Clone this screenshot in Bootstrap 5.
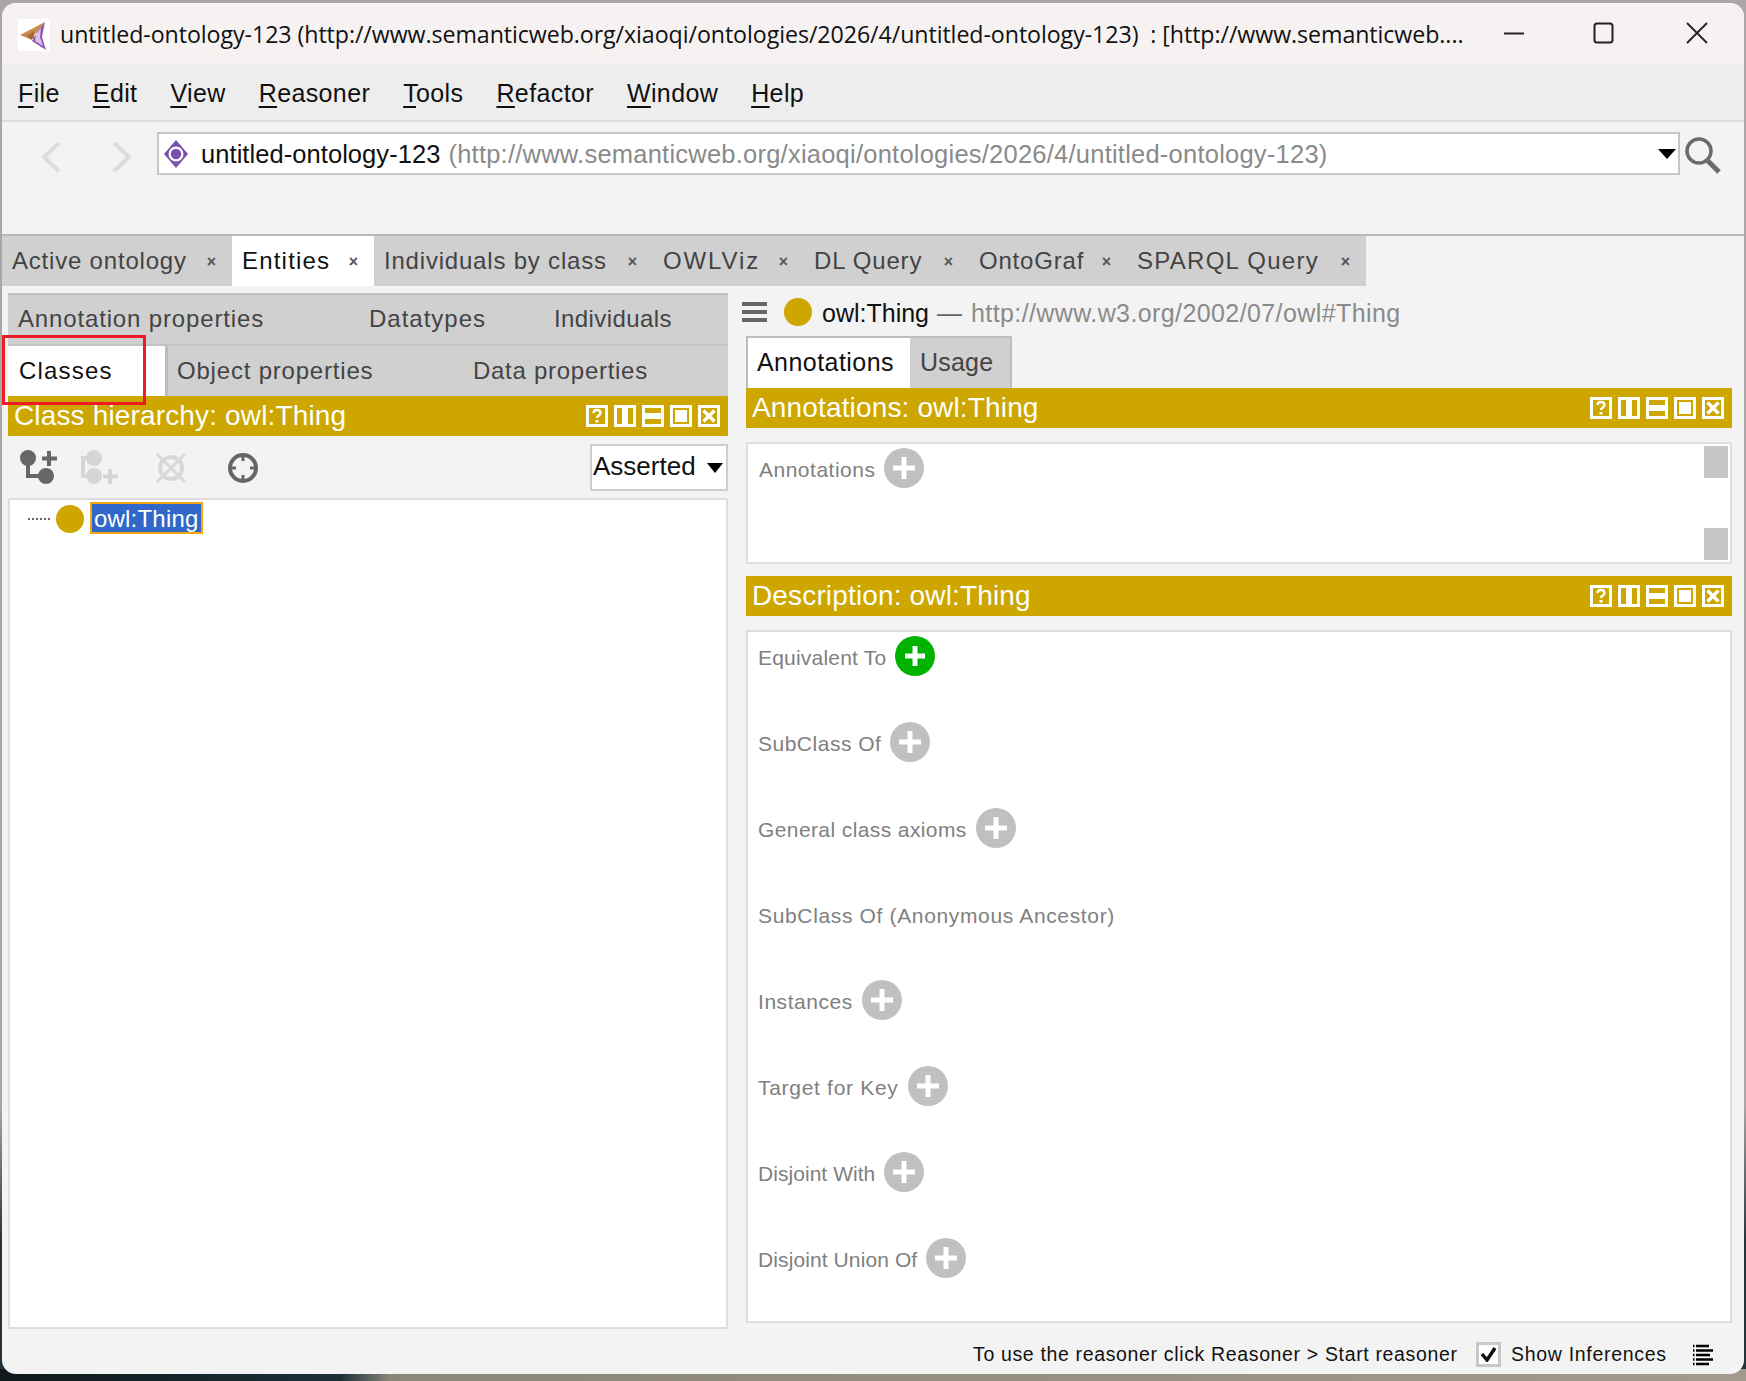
<!DOCTYPE html>
<html lang="en">
<head>
<meta charset="utf-8">
<title>Protégé</title>
<link rel="stylesheet" href="https://cdn.jsdelivr.net/npm/bootstrap@5.3.0/dist/css/bootstrap.min.css">
<style>
html,body{height:1381px;margin:0;overflow:hidden}
body{font-family:"Liberation Sans",Arial,sans-serif;color:#000;background:linear-gradient(to right,#10181a 0,#1a3038 340px,#8a8679 390px,#a39a8e 1746px) bottom/100% 12px no-repeat,linear-gradient(#aaa6a6 80%,#25333a 90%)}
.pw{margin:3px 0 0 2px;width:1742px;height:1371px;border-radius:14px;background:#f3f3f3;overflow:hidden;position:relative}
.ttl{height:61px;background:#f6f2f2;padding:2px 0 0 16px}
.ttl-text{font-family:"Open Sans","Noto Sans",sans-serif;font-size:23.2px;letter-spacing:-.07px;color:#111;margin-left:10px;width:1430px;white-space:pre}
.logo{width:32px;height:32px;background:#fff}
.wb{position:absolute;top:0;height:61px}
.wb1{left:1499px}.wb2{left:1590px}.wb3{left:1683px}
.mbar{height:58px;background:#ededed;border-bottom:2px solid #dcdcdc;font-size:25px;letter-spacing:.38px;padding:4px 0 0 16px;gap:33px;color:#111}
.mbar u{text-underline-offset:4px;text-decoration-thickness:2px}
.tbar{height:114px;background:#f3f3f3;border-bottom:2px solid #b8b8b8;padding:10px 0 0 0}
.nav-c{width:155px;height:47px;padding:2px 0 0 38px;gap:49px}
.addr{width:1523px;height:43px;background:#fff;border:2px solid #c6c6c6;font-size:25.5px;padding:2px 0 0 3px;position:relative}
.addr-name{margin-left:11px;color:#111;letter-spacing:.06px}
.addr-url{margin-left:8px;color:#8a8a8a;letter-spacing:.23px}
.ddarrow{width:0;height:0;border-left:9px solid transparent;border-right:9px solid transparent;border-top:10px solid #000}
.addr .ddarrow{position:absolute;right:2px;top:15px}
.mtabs{height:50px;font-size:24px;letter-spacing:.8px;color:#444}
.mtabs-in{background:#d0d0d0;width:1364px}
.mt{height:50px;padding-left:10px;white-space:nowrap}
.mt-on{background:#fff;color:#111}
.mt b{font-weight:700;font-size:16px;letter-spacing:0;color:#555;position:relative;top:1px;margin-right:16px}
.t1{width:230px}.t2{width:142px}.t3{width:279px}.t4{width:151px}.t5{width:165px}.t6{width:158px}.t7{width:239px}
.lsE{letter-spacing:1.2px}.lsO{letter-spacing:1.9px}.lsS{letter-spacing:1.27px}
.bdy{padding:7px 0 0 6px;gap:18px;height:1088px}
.lc{width:720px}.rc{width:986px}
.stabs{background:#d0d0d0;border-top:2px solid #c2c2c2;font-size:24px;letter-spacing:.85px;color:#444}
.st-r{height:49px}
.st-r2{height:52px;border-top:2px solid #c2c2c2}
.st-r .st{padding-bottom:2px}
.st{padding-left:10px;white-space:nowrap}
.st-on{background:#fff;color:#111;border-right:3px solid #bdbdbd;letter-spacing:1.2px}
.s1{width:351px}.s2{width:185px;letter-spacing:1px}.s3{width:184px;letter-spacing:.4px}.s4{width:160px;padding-left:11px}.s5{width:295px;padding-left:9px;letter-spacing:.8px}.s6{width:265px;letter-spacing:.72px}
.ghead{height:40px;background:#cda600;color:#fff;font-size:28px;letter-spacing:.15px;padding:0 8px 0 6px;white-space:nowrap}
.gi{width:22px;height:22px;margin-left:6px;display:block}
.ltb{height:62px;padding-right:0}
.ti{display:block;position:absolute}
.ti1{left:12px;top:12px}.ti2{left:66px;top:12px}.ti3{left:142px;top:12px}.ti4{left:212px;top:12px}
.asrt{width:138px;height:47px;background:#fff;border:2px solid #cfcfcf;font-size:26px;padding:0 3px 2px 1px;color:#111;margin-top:8px;margin-left:auto}
.asrt .ddarrow{border-left-width:8.500px;border-right-width:8.500px;position:relative;top:1px}
.wpanel{background:#fff;border:2px solid #dedede}
.tree{height:831px;padding:2px 0 0 18px}
.dots{width:22px;border-top:2px dotted #666;margin-right:6px}
.gdot{width:28px;height:28px;border-radius:50%;background:#cda600;flex:none}
.tdot{margin-top:3px}
.sel{margin-left:6px;height:32px;width:113px;background:#3067c8;border:2px solid #f5a60f;color:#fff;font-size:24px;letter-spacing:.2px;line-height:29px;padding-left:2px}
.ent{height:43px;padding:0 0 6px 0;font-size:25px;white-space:nowrap}
.burg{width:25px;margin-left:-4px;margin-right:17px}
.burg i{display:block;height:4px;background:#666;margin-bottom:4px}
.burg i:last-child{margin-bottom:0}
.ent-n{margin:4px 0 0 10px;color:#111}
.ent-d{margin:4px 0 0 8px;color:#666}
.ent-u{margin:4px 0 0 9px;color:#8a8a8a;letter-spacing:.4px}
.rtabs{height:52px;font-size:25px;letter-spacing:.45px}
.rt{padding-left:9px;border:2px solid #bdbdbd;border-bottom:0;white-space:nowrap}
.rt-a{width:164px;background:#fff;color:#111;border-right:0}
.rt-b{width:102px;background:#d0d0d0;color:#444;border-left:0;padding-left:10px;letter-spacing:.2px}
.anbox{height:122px;margin-top:14px;margin-bottom:12px;padding:4px 0 0 11px;position:relative}
.desc{height:693px;margin-top:14px;padding:4px 0 0 10px;gap:46px}
.rw{height:40px;gap:9px;font-size:21px;letter-spacing:.3px;color:#808080;white-space:nowrap}
.rw>span{padding-top:4px}
.l1{letter-spacing:.5px}.l2{letter-spacing:.2px}.l3{letter-spacing:.5px}.l4{letter-spacing:.4px}.l5{letter-spacing:.65px}.l6{letter-spacing:.55px}.l7{letter-spacing:.7px}.l8{letter-spacing:.05px}.l9{letter-spacing:.1px}
.pc{width:40px;height:40px;display:block;flex:none}
.thumb{position:absolute;left:956px;width:24px;height:32px;background:#c6c6c6}
.th1{top:2px}.th2{top:84px}
.stbar{position:absolute;left:0;right:0;top:1320px;height:51px;font-size:19.5px;color:#111;white-space:nowrap}
.st-t{position:absolute;left:971px;top:19px;letter-spacing:.65px;line-height:24px}
.st-c{position:absolute;left:1474px;top:19px;width:25px;height:25px;background:#fff;border:3px solid #c8c8c8}
.st-s{position:absolute;left:1509px;top:19px;letter-spacing:.7px;line-height:24px}
.st-l{position:absolute;left:1691px;top:21px;display:block}
.redbox{position:absolute;left:0;top:332px;width:144px;height:70px;border:3px solid #ed1c24;pointer-events:none}
.sv{display:none}
</style>
</head>
<body>
<svg class="sv" xmlns="http://www.w3.org/2000/svg">
<symbol id="h1" viewBox="0 0 22 22"><rect x="1.500" y="1.500" width="19" height="19" fill="none" stroke="#fff" stroke-width="3"/><path d="M7.500 8c0-4 7-4 7 0 0 2.500-3.500 2.500-3.500 5" fill="none" stroke="#fff" stroke-width="2.500"/><rect x="9.500" y="15" width="3" height="2.500" fill="#fff"/></symbol>
<symbol id="h2" viewBox="0 0 22 22"><rect x="1.500" y="1.500" width="19" height="19" fill="none" stroke="#fff" stroke-width="3"/><rect x="8" y="1" width="6" height="20" fill="#fff"/></symbol>
<symbol id="h3" viewBox="0 0 22 22"><rect x="1.500" y="1.500" width="19" height="19" fill="none" stroke="#fff" stroke-width="3"/><rect x="1" y="8" width="20" height="6" fill="#fff"/></symbol>
<symbol id="h4" viewBox="0 0 22 22"><rect x="1.500" y="1.500" width="19" height="19" fill="none" stroke="#fff" stroke-width="3"/><rect x="5" y="5" width="12" height="12" fill="#fff"/></symbol>
<symbol id="h5" viewBox="0 0 22 22"><rect x="1.500" y="1.500" width="19" height="19" fill="none" stroke="#fff" stroke-width="3"/><path d="M5.500 5.500l11 11M16.500 5.500l-11 11" stroke="#fff" stroke-width="3.500"/></symbol>
<symbol id="pg" viewBox="0 0 40 40"><circle cx="20" cy="20" r="20" fill="#c0c0c0"/><path d="M20 9v22M9 20h22" stroke="#fff" stroke-width="5"/></symbol>
<symbol id="pn" viewBox="0 0 40 40"><circle cx="20" cy="20" r="20" fill="#00b300"/><path d="M20 10v20M10 20h20" stroke="#fff" stroke-width="5"/></symbol>
</svg>

<div class="pw d-flex flex-column">
  <div class="ttl d-flex align-items-center flex-shrink-0">
    <svg class="logo flex-shrink-0" viewBox="0 0 32 32"><path d="M27 3L2 16l10 4 7-7z" fill="#c98a4a"/><path d="M27 3l-8 10-5 9 14 9-4-13z" fill="#8e56b5"/><path d="M23 9l-5 6-1 7 8 5-3-9z" fill="#d9c3e6"/><path d="M9 17l7-5 0 7-3 2z" fill="#a4683a"/></svg>
    <span class="ttl-text">untitled-ontology-123 (http://www.semanticweb.org/xiaoqi/ontologies/2026/4/untitled-ontology-123)  : [http://www.semanticweb....</span>
    <svg class="wb wb1" width="26" height="61" viewBox="0 0 26 61"><path d="M3 30.500h20" stroke="#222" stroke-width="2"/></svg>
    <svg class="wb wb2" width="24" height="61" viewBox="0 0 24 61"><rect x="2.500" y="20.500" width="18" height="19" rx="2.500" fill="none" stroke="#222" stroke-width="2"/></svg>
    <svg class="wb wb3" width="26" height="61" viewBox="0 0 26 61"><path d="M2 20l20 20M22 20L2 40" stroke="#222" stroke-width="1.800"/></svg>
  </div>
  <div class="mbar d-flex align-items-center flex-shrink-0">
    <span><u>F</u>ile</span><span><u>E</u>dit</span><span><u>V</u>iew</span><span><u>R</u>easoner</span><span><u>T</u>ools</span><span><u>R</u>efactor</span><span><u>W</u>indow</span><span><u>H</u>elp</span>
  </div>
  <div class="tbar d-flex align-items-start flex-shrink-0">
    <div class="nav-c d-flex align-items-center">
      <svg width="22" height="32" viewBox="0 0 22 32"><path d="M19 2L4 16l15 14" fill="none" stroke="#dcdcdc" stroke-width="4"/></svg>
      <svg width="22" height="32" viewBox="0 0 22 32"><path d="M3 2l15 14L3 30" fill="none" stroke="#dcdcdc" stroke-width="4"/></svg>
    </div>
    <div class="addr d-flex align-items-center">
      <svg class="flex-shrink-0" width="28" height="30" viewBox="0 0 28 30"><path d="M14 0l12 14-12 14L2 14z" fill="#7b4fb0"/><circle cx="14" cy="14" r="7.500" fill="#fff"/><circle cx="14" cy="14" r="5.200" fill="#7b4fb0"/></svg>
      <span class="addr-name">untitled-ontology-123</span><span class="addr-url">(http://www.semanticweb.org/xiaoqi/ontologies/2026/4/untitled-ontology-123)</span>
      <span class="ddarrow"></span>
    </div>
    <svg class="ms-1 mt-1" width="38" height="38" viewBox="0 0 38 38"><circle cx="15" cy="15" r="12" fill="none" stroke="#6b6b6b" stroke-width="3.500"/><path d="M23 24l12 12" stroke="#6b6b6b" stroke-width="5"/></svg>
  </div>
  <div class="mtabs d-flex flex-shrink-0">
    <div class="mtabs-in d-flex">
      <div class="mt t1 d-flex align-items-center justify-content-between"><span>Active ontology</span><b>×</b></div>
      <div class="mt t2 mt-on d-flex align-items-center justify-content-between"><span class="lsE">Entities</span><b>×</b></div>
      <div class="mt t3 d-flex align-items-center justify-content-between"><span>Individuals by class</span><b>×</b></div>
      <div class="mt t4 d-flex align-items-center justify-content-between"><span class="lsO">OWLViz</span><b>×</b></div>
      <div class="mt t5 d-flex align-items-center justify-content-between"><span>DL Query</span><b>×</b></div>
      <div class="mt t6 d-flex align-items-center justify-content-between"><span>OntoGraf</span><b>×</b></div>
      <div class="mt t7 d-flex align-items-center justify-content-between"><span class="lsS">SPARQL Query</span><b>×</b></div>
    </div>
  </div>
  <div class="bdy d-flex flex-grow-1">
    <div class="lc d-flex flex-column">
      <div class="stabs">
        <div class="st-r d-flex"><div class="st s1 d-flex align-items-center">Annotation properties</div><div class="st s2 d-flex align-items-center">Datatypes</div><div class="st s3 d-flex align-items-center">Individuals</div></div>
        <div class="st-r2 d-flex"><div class="st st-on s4 d-flex align-items-center">Classes</div><div class="st s5 d-flex align-items-center">Object properties</div><div class="st s6 d-flex align-items-center">Data properties</div></div>
      </div>
      <div class="ghead d-flex align-items-center"><span class="flex-grow-1">Class hierarchy: owl:Thing</span>
        <svg class="gi"><use href="#h1"/></svg><svg class="gi"><use href="#h2"/></svg><svg class="gi"><use href="#h3"/></svg><svg class="gi"><use href="#h4"/></svg><svg class="gi"><use href="#h5"/></svg></div>
      <div class="ltb d-flex position-relative">
        <svg class="ti ti1" width="44" height="44" viewBox="0 0 44 44"><path d="M8 10v18h18" fill="none" stroke="#666" stroke-width="4"/><circle cx="8" cy="10" r="8" fill="#666"/><circle cx="26" cy="28" r="8" fill="#666"/><path d="M29 3v15M22 10.500h15" stroke="#666" stroke-width="4"/></svg>
        <svg class="ti ti2" width="44" height="44" viewBox="0 0 44 44"><path d="M20 10H9v18h11" fill="none" stroke="#d6d6d6" stroke-width="4"/><circle cx="20" cy="10" r="8" fill="#d6d6d6"/><circle cx="20" cy="28" r="8" fill="#d6d6d6"/><path d="M36 21v15M29 28.500h15" stroke="#d6d6d6" stroke-width="4"/></svg>
        <svg class="ti ti3" width="44" height="44" viewBox="0 0 44 44"><circle cx="21" cy="20" r="11" fill="none" stroke="#d8d8d8" stroke-width="4"/><path d="M7 6l28 28M35 6L7 34" stroke="#d8d8d8" stroke-width="3"/></svg>
        <svg class="ti ti4" width="44" height="44" viewBox="0 0 44 44"><circle cx="23" cy="20" r="13" fill="none" stroke="#666" stroke-width="4"/><path d="M23 7v6M23 27v6M10 20h6M30 20h6" stroke="#666" stroke-width="3"/></svg>
        <div class="asrt d-flex align-items-center justify-content-between"><span>Asserted</span><span class="ddarrow"></span></div>
      </div>
      <div class="wpanel tree d-flex align-items-start">
        <span class="dots mt-3"></span><span class="gdot tdot"></span><span class="sel">owl:Thing</span>
      </div>
    </div>
    <div class="rc d-flex flex-column">
      <div class="ent d-flex align-items-center">
        <span class="burg"><i></i><i></i><i></i></span><span class="gdot"></span><span class="ent-n">owl:Thing</span><span class="ent-d">—</span><span class="ent-u">http://www.w3.org/2002/07/owl#Thing</span>
      </div>
      <div class="rtabs d-flex"><div class="rt rt-a d-flex align-items-center">Annotations</div><div class="rt rt-b d-flex align-items-center">Usage</div></div>
      <div class="ghead d-flex align-items-center"><span class="flex-grow-1">Annotations: owl:Thing</span>
        <svg class="gi"><use href="#h1"/></svg><svg class="gi"><use href="#h2"/></svg><svg class="gi"><use href="#h3"/></svg><svg class="gi"><use href="#h4"/></svg><svg class="gi"><use href="#h5"/></svg></div>
      <div class="wpanel anbox">
        <div class="rw l1 d-flex align-items-center"><span>Annotations</span><svg class="pc"><use href="#pg"/></svg></div>
        <span class="thumb th1"></span><span class="thumb th2"></span>
      </div>
      <div class="ghead d-flex align-items-center"><span class="flex-grow-1">Description: owl:Thing</span>
        <svg class="gi"><use href="#h1"/></svg><svg class="gi"><use href="#h2"/></svg><svg class="gi"><use href="#h3"/></svg><svg class="gi"><use href="#h4"/></svg><svg class="gi"><use href="#h5"/></svg></div>
      <div class="wpanel desc d-flex flex-column">
        <div class="rw l2 d-flex align-items-center"><span>Equivalent To</span><svg class="pc"><use href="#pn"/></svg></div>
        <div class="rw l3 d-flex align-items-center"><span>SubClass Of</span><svg class="pc"><use href="#pg"/></svg></div>
        <div class="rw l4 d-flex align-items-center"><span>General class axioms</span><svg class="pc"><use href="#pg"/></svg></div>
        <div class="rw l5 d-flex align-items-center"><span>SubClass Of (Anonymous Ancestor)</span></div>
        <div class="rw l6 d-flex align-items-center"><span>Instances</span><svg class="pc"><use href="#pg"/></svg></div>
        <div class="rw l7 d-flex align-items-center"><span>Target for Key</span><svg class="pc"><use href="#pg"/></svg></div>
        <div class="rw l8 d-flex align-items-center"><span>Disjoint With</span><svg class="pc"><use href="#pg"/></svg></div>
        <div class="rw l9 d-flex align-items-center"><span>Disjoint Union Of</span><svg class="pc"><use href="#pg"/></svg></div>
      </div>
    </div>
  </div>
  <div class="stbar">
    <span class="st-t">To use the reasoner click Reasoner &gt; Start reasoner</span>
    <span class="st-c d-flex align-items-center justify-content-center"><svg width="17" height="15" viewBox="0 0 17 15"><path d="M2 7l5 6 8-12" fill="none" stroke="#111" stroke-width="3.500"/></svg></span>
    <span class="st-s">Show Inferences</span>
    <svg class="st-l" width="22" height="24" viewBox="0 0 22 24"><path d="M3 2h13M3 6.500h17M3 11h14M3 15.500h17M3 20h13" stroke="#000" stroke-width="2.400"/><path d="M0 2h1.500M0 6.500h1.500M0 11h1.500M0 15.500h1.500M0 20h1.500" stroke="#000" stroke-width="2.400"/></svg>
  </div>
  <div class="redbox"></div>
</div>
<script src="https://cdn.jsdelivr.net/npm/bootstrap@5.3.0/dist/js/bootstrap.bundle.min.js"></script>
</body>
</html>
